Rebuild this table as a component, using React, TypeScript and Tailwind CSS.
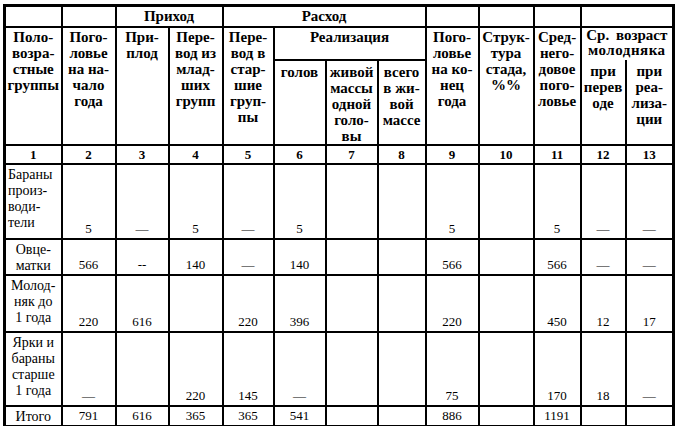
const head = 'border-2 border-black align-top text-center font-bold text-[15px] leading-[16px] pt-[1px] px-0 whitespace-nowrap'
const cell = 'border-2 border-black align-bottom text-center text-[13px] leading-[16px] pb-[1px] px-0 whitespace-nowrap'

type Row = {
  label: string[]
  left?: boolean
  h: string
  vals: string[]
}

const rows: Row[] = [
  { label: ['Бараны', 'произ-', 'води-', 'тели'], left: true, h: 'h-[75px]', vals: ['5', '—', '5', '—', '5', '', '', '5', '', '5', '—', '—'] },
  { label: ['Овце-', 'матки'], h: 'h-[36px]', vals: ['566', '--', '140', '—', '140', '', '', '566', '', '566', '—', '—'] },
  { label: ['Молод-', 'няк до', '1 года'], h: 'h-[57px]', vals: ['220', '616', '', '220', '396', '', '', '220', '', '450', '12', '17'] },
  { label: ['Ярки и', 'бараны', 'старше', '1 года'], h: 'h-[74px]', vals: ['—', '', '220', '145', '—', '', '', '75', '', '170', '18', '—'] },
  { label: ['Итого'], h: 'h-[18px]', vals: ['791', '616', '365', '365', '541', '', '', '886', '', '1191', '', ''] },
]

function Lines({ lines }: { lines: string[] }) {
  return (
    <>
      {lines.map((l, i) => (
        <div key={i}>{l}</div>
      ))}
    </>
  )
}

export default function App() {
  return (
    <div className="w-[680px] h-[426px] bg-white text-black font-['Liberation_Serif',serif] pt-[4px] pl-[3px]">
      <table className="border-collapse table-fixed w-[671px] border-[3px] border-black">
        <colgroup>
          <col className="w-[57px]" />
          <col className="w-[54px]" />
          <col className="w-[53px]" />
          <col className="w-[54px]" />
          <col className="w-[51px]" />
          <col className="w-[52px]" />
          <col className="w-[52px]" />
          <col className="w-[48px]" />
          <col className="w-[53px]" />
          <col className="w-[55px]" />
          <col className="w-[47px]" />
          <col className="w-[45px]" />
          <col className="w-[48px]" />
        </colgroup>
        <thead>
          <tr className="h-[21px]">
            <th className={head}></th>
            <th className={head}></th>
            <th colSpan={2} className={head}>Приход</th>
            <th colSpan={4} className={head}>Расход</th>
            <th className={head}></th>
            <th className={head}></th>
            <th className={head}></th>
            <th colSpan={2} className={head}></th>
          </tr>
          <tr className="h-[33px]">
            <th rowSpan={2} className={head}><Lines lines={['Поло-', 'возра-', 'стные', 'группы']} /></th>
            <th rowSpan={2} className={head}><Lines lines={['Пого-', 'ловье', 'на на-', 'чало', 'года']} /></th>
            <th rowSpan={2} className={head}><Lines lines={['При-', 'плод']} /></th>
            <th rowSpan={2} className={head}><Lines lines={['Пере-', 'вод из', 'млад-', 'ших', 'групп']} /></th>
            <th rowSpan={2} className={head}><Lines lines={['Пере-', 'вод в', 'стар-', 'шие', 'груп-', 'пы']} /></th>
            <th colSpan={3} className={head}>Реализация</th>
            <th rowSpan={2} className={head}><Lines lines={['Пого-', 'ловье', 'на ко-', 'нец', 'года']} /></th>
            <th rowSpan={2} className={head}><Lines lines={['Струк-', 'тура', 'стада,', '%%']} /></th>
            <th rowSpan={2} className={head}><Lines lines={['Сред-', 'него-', 'довое', 'пого-', 'ловье']} /></th>
            <th colSpan={2} className="border-2 border-b-0 border-black align-top text-center font-bold text-[15px] leading-[15px] p-0 whitespace-nowrap">
              <div className="[word-spacing:3px]">Ср. возраст</div>
              <div className="tracking-[0.5px]">молодняка</div>
            </th>
          </tr>
          <tr className="h-[84px]">
            <th className={head + ' pt-[3px]'}>голов</th>
            <th className={head + ' pt-[3px]'}><Lines lines={['живой', 'массы', 'одной', 'голо-', 'вы']} /></th>
            <th className={head + ' pt-[3px]'}><Lines lines={['всего', 'в жи-', 'вой', 'массе']} /></th>
            <th className={head + ' border-t-0 pt-[3px]'}><Lines lines={['при', 'перев', 'оде']} /></th>
            <th className={head + ' border-t-0 pt-[3px]'}><Lines lines={['при', 'реа-', 'лиза-', 'ции']} /></th>
          </tr>
          <tr className="h-[19px]">
            {['1', '2', '3', '4', '5', '6', '7', '8', '9', '10', '11', '12', '13'].map((n) => (
              <th key={n} className="border-2 border-black text-center align-middle font-bold text-[13px] leading-[15px] p-0">{n}</th>
            ))}
          </tr>
        </thead>
        <tbody>
          {rows.map((r, i) => (
            <tr key={i} className={r.h}>
              <td className={'border-2 border-black align-top text-[14px] leading-[16px] pt-[2px] whitespace-nowrap ' + (r.left ? 'text-left pl-[2px]' : 'text-center px-0')}>
                <Lines lines={r.label} />
              </td>
              {r.vals.map((v, j) => (
                <td key={j} className={cell}>{v}</td>
              ))}
            </tr>
          ))}
        </tbody>
      </table>
    </div>
  )
}
